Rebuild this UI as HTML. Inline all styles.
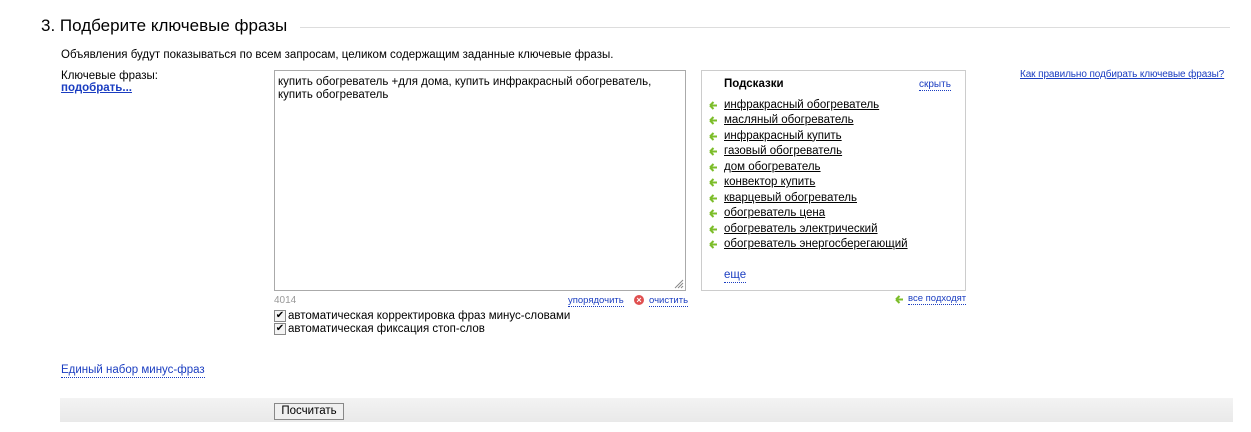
<!DOCTYPE html>
<html><head><meta charset="utf-8"><style>
body{margin:0;width:1251px;height:432px;background:#fff;font-family:"Liberation Sans",Arial,sans-serif;position:relative;overflow:hidden;color:#000}
.a{position:absolute;white-space:nowrap}
.lnk{color:#1a3dc1;text-decoration:underline}
.dot{color:#1a3dc1;border-bottom:1px dotted #1a3dc1;text-decoration:none}
.s{font-size:11.5px;color:#000;text-decoration:underline;left:724px}
.ar{position:absolute;left:709px;width:9px;height:9px}
</style></head><body>
<div class="a" style="left:41px;top:16px;font-size:17px">3. Подберите ключевые фразы</div>
<div class="a" style="left:300px;top:27px;width:930px;height:1px;background:#ddd"></div>
<div class="a" style="left:61px;top:49px;font-size:11.5px">Объявления будут показываться по всем запросам, целиком содержащим заданные ключевые фразы.</div>
<div class="a" style="left:61px;top:70px;font-size:11.5px">Ключевые фразы:</div>
<div class="a lnk" style="left:61px;top:82px;font-size:11.5px;font-weight:bold">подобрать...</div>
<div class="a" style="left:274px;top:70px;border:1px solid #aaa;font-size:11.5px;line-height:13px;padding:5px 3px;box-sizing:border-box;width:412px;height:221px;white-space:normal">купить обогреватель +для дома, купить инфракрасный обогреватель,<br>купить обогреватель</div>
<svg class="a" style="left:673px;top:278px" width="11" height="11"><path d="M2 10L10 2M5 10L10 5M8 10L10 8" stroke="#888" stroke-width="1"/></svg>
<div class="a" style="left:701px;top:70px;width:265px;height:221px;border:1px solid #ccc;box-sizing:border-box"></div>
<div class="a" style="left:724px;top:78px;font-size:11.5px;font-weight:bold">Подсказки</div>
<div class="a dot" style="left:919px;top:79px;font-size:10px;line-height:11px">скрыть</div>
<div class="a" style="left:1020px;top:69px;font-size:10px;letter-spacing:-0.1px"><span class="lnk">Как правильно подбирать ключевые фразы?</span></div>
<div id="sg"></div>
<div class="a dot" style="left:724px;top:269px;font-size:11.5px;line-height:13px">еще</div>
<svg class="ar" style="top:295px;left:895px" viewBox="0 0 9 9"><path d="M1 4.5H8M1 4.5L4.5 1M1 4.5L4.5 8" stroke="#7cbd2a" stroke-width="2" fill="none"/></svg>
<div class="a dot" style="left:908px;top:294px;font-size:9.5px;line-height:10px">все подходят</div>
<div class="a" style="left:274px;top:295px;font-size:10px;color:#999">4014</div>
<div class="a dot" style="left:568px;top:295px;font-size:9.5px;line-height:11px">упорядочить</div>
<div class="a" style="left:634px;top:295px;width:10px;height:10px;border-radius:50%;background:#e05050;color:#fff;font-size:9px;line-height:10px;text-align:center;font-weight:bold">×</div>
<div class="a dot" style="left:649px;top:295px;font-size:9.5px;line-height:11px">очистить</div>
<div class="a" style="left:274px;top:310px;width:10px;height:10px;border:1px solid #888;background:#f4f4f4;font-size:10px;line-height:10px;text-align:center">✔</div>
<div class="a" style="left:288px;top:310px;font-size:11.5px">автоматическая корректировка фраз минус-словами</div>
<div class="a" style="left:274px;top:323px;width:10px;height:10px;border:1px solid #888;background:#f4f4f4;font-size:10px;line-height:10px;text-align:center">✔</div>
<div class="a" style="left:288px;top:323px;font-size:11.5px">автоматическая фиксация стоп-слов</div>
<div class="a dot" style="left:61px;top:363px;font-size:11.5px;line-height:14px">Единый набор минус-фраз</div>
<div class="a" style="left:60px;top:398px;width:1173px;height:24px;background:linear-gradient(#f3f3f3,#e9e9e9)"></div>
<div class="a" style="left:274px;top:403px;width:70px;height:17px;border:1px solid #888;background:#f0f0f0;box-sizing:border-box;font-size:11.5px;line-height:15px;text-align:center">Посчитать</div>
<script>
var w=["инфракрасный обогреватель","масляный обогреватель","инфракрасный купить","газовый обогреватель","дом обогреватель","конвектор купить","кварцевый обогреватель","обогреватель цена","обогреватель электрический","обогреватель энергосберегающий"],h="";
w.forEach(function(t,i){var y=98.5+i*15.5;h+='<svg class="ar" style="top:'+(y+2)+'px" viewBox="0 0 9 9"><path d="M1 4.5H8M1 4.5L4.5 1M1 4.5L4.5 8" stroke="#7cbd2a" stroke-width="2" fill="none"/></svg><div class="a s" style="top:'+y+'px">'+t+'</div>';});
document.getElementById("sg").innerHTML=h;
</script>
</body></html>
